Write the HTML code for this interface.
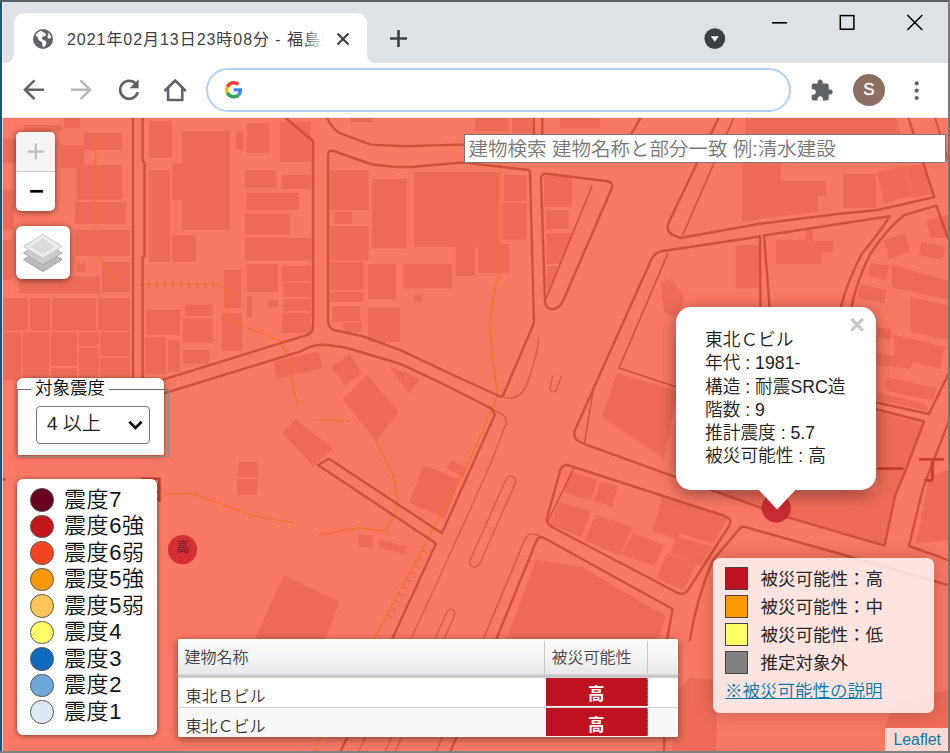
<!DOCTYPE html>
<html lang="ja">
<head>
<meta charset="utf-8">
<title>2021年02月13日23時08分 - 福島</title>
<style>
*{box-sizing:border-box;margin:0;padding:0}
html,body{width:950px;height:753px;overflow:hidden;background:#dee1e6}
body{position:relative;font-family:"Liberation Sans","Noto Sans CJK JP",sans-serif;color:#000}
.abs{position:absolute}
/* window frame */
#frameL{left:0;top:0;width:2px;height:753px;background:#185679;box-shadow:1px 0 0 rgba(255,255,255,.55)}
#frameT{left:0;top:0;width:950px;height:2px;background:#5b5e62}
#frameR{left:948px;top:0;width:2px;height:753px;background:#77787a}
#frameB{left:0;top:750.6px;width:950px;height:2.4px;background:#808182}
/* tab strip */
#tabstrip{left:2px;top:2px;width:946px;height:62px;background:#dee1e6}
#toolbar{left:2px;top:63px;width:946px;height:55px;background:#fff;border-bottom:1px solid #e3e8e7}
#tabtitle{left:67px;top:29px;width:257px;height:22px;font-size:16px;letter-spacing:.95px;line-height:22px;color:#3c4043;white-space:nowrap;overflow:hidden}
#tabfade{left:303px;top:28px;width:22px;height:24px;background:linear-gradient(90deg,rgba(255,255,255,0),#fff)}
#omni{left:206px;top:68px;width:585px;height:44px;border:2.5px solid #b2cff8;border-radius:22px;background:#fff}
#avatar{left:853px;top:74px;width:32px;height:32px;border-radius:50%;background:#8d6e63;color:#fff;font-size:17px;line-height:32px;text-align:center;-webkit-text-stroke:.35px #fff}
/* map */
#map{left:2px;top:118px;width:946px;height:633px;background:#f87964;overflow:hidden}

/* map UI (coords relative to #map: page x-2, page y-118) */
.jp{font-family:"Liberation Sans","Noto Sans CJK JP",sans-serif;font-weight:350}
#zoomc{left:14px;top:14px;width:39px;height:79px;border-radius:5px;background:#fff;box-shadow:0 1px 6px rgba(0,0,0,.55);overflow:hidden}
#zoomc .zi{height:39.5px;background:#f4f4f4;border-bottom:1px solid #ccc}
#layers{left:14px;top:107.5px;width:54px;height:53.5px;border-radius:6px;background:#fff;box-shadow:0 1px 6px rgba(0,0,0,.55)}
#search{left:461.5px;top:15.5px;width:482px;height:29.4px;background:#fff;border:1.5px solid #767676;font-size:19.5px;line-height:28px;color:#777;padding-left:4px;white-space:nowrap;overflow:hidden}
#fsbox{left:15px;top:260px;width:147px;height:77px;background:#fff;border-radius:6px 6px 2px 2px;box-shadow:0 1px 5px rgba(0,0,0,.5)}
#fsborder{left:15px;top:270.5px;width:152px;height:68px;border:1.5px solid #8a8a8a;border-top-color:#6b6b6b}
#fslegend{left:29px;top:260.5px;height:21px;padding:0 4px;background:#fff;font-size:17.5px;line-height:19px;white-space:nowrap}
#sel{left:34px;top:288px;width:114px;height:38px;border:1.3px solid #767676;border-radius:4px;background:#fff;font-size:19px;line-height:34px;padding-left:10px;white-space:nowrap;color:#222}
#leg1{left:15px;top:361px;width:140px;height:256px;background:#fff;border-radius:6px;box-shadow:0 1px 5px rgba(0,0,0,.5)}
#leg1 .r{position:absolute;left:0;width:140px;height:26.5px}
#leg1 .c{position:absolute;left:13px;top:1.5px;width:23.5px;height:23.5px;border-radius:50%;border:1.2px solid #555}
#leg1 .t{position:absolute;left:47px;top:-3px;font-size:22px;letter-spacing:.6px;line-height:32px;white-space:nowrap;color:#111}
#leg2{left:711px;top:439.5px;width:221px;height:155.5px;background:rgba(255,255,255,.8);border-radius:7px;box-shadow:0 0 19px rgba(0,0,0,.22)}
#leg2 .s{position:absolute;left:12px;width:23px;height:22.5px;border:1.2px solid #444}
#leg2 .t{position:absolute;left:47.5px;font-size:17.5px;font-weight:400;line-height:24px;white-space:nowrap;color:#262626}
#leg2 a{position:absolute;left:12px;top:121px;font-size:17.5px;line-height:24px;color:#0078a8;text-decoration:underline;white-space:nowrap}
#attr{left:883px;top:610px;width:63px;height:23px;background:rgba(255,255,255,.72);color:#0078a8;font-size:15.8px;line-height:24px;text-align:center;padding-left:1.5px}
#popup{left:674px;top:189.2px;width:200.4px;height:182.8px;background:#fff;border-radius:15px;box-shadow:0 4px 17px rgba(0,0,0,.4)}
#popup .l{position:absolute;left:29px;font-size:17.7px;line-height:23.2px;white-space:nowrap;color:#222}
#popclose{left:843.2px;top:194.2px;width:24px;height:26px;font:bold 27px/26px "Liberation Sans",sans-serif;color:#c6c6c6;text-align:center}
#tbl{left:176px;top:520.5px;width:500px;height:98px;background:#fff;box-shadow:0 2px 8px rgba(0,0,0,.45);border-radius:2px;overflow:hidden}
#tbl .h{position:absolute;left:0;top:0;width:500px;height:39.5px;background:linear-gradient(#fbfbfb 0,#f3f4f5 50%,#e6e8ea 90%,#c6c8ca 92%,#c2c4c6 97%,#d6d7d8 100%)}
#tbl .hs{position:absolute;top:2px;width:1.3px;height:33px;background:#c8c8c8}
#tbl .ht{position:absolute;top:7px;font-size:16px;line-height:24px;color:#444;white-space:nowrap}
#tbl .row{position:absolute;left:0;width:500px;height:29.5px}
#tbl .n{position:absolute;left:7.5px;top:7px;font-size:16px;line-height:24px;color:#333;white-space:nowrap}
#tbl .red{position:absolute;left:368px;top:0;width:101.7px;height:28.4px;background:#bf1220;border-right:1.5px dotted #e08088;color:#fff;font-weight:bold;font-size:16.5px;line-height:33px;text-align:center}
</style>
</head>
<body>
<div id="tabstrip" class="abs"></div>
<div id="toolbar" class="abs"></div>

<!-- active tab shape -->
<svg class="abs" style="left:0;top:0" width="950" height="120" viewBox="0 0 950 120">
  <path d="M3 64 C9 64 14 60 14 53 L14 24 C14 17 19 13 25 13 L356 13 C362 13 367 17 367 24 L367 53 C367 60 371 64 378 64 Z" fill="#fff"/>
  <!-- globe favicon -->
  <g transform="translate(33,29)">
    <circle cx="10" cy="10" r="10" fill="#5f6368"/>
    <path d="M8.8 1.7 C6 2.2 3.5 4 2.4 6.6 C4 7.4 5.2 8.6 5.4 10.2 C5.6 11.8 7.4 12 8.6 13 C9.6 13.9 8.9 15.6 9.6 17.2 C9.9 17.9 10.4 18.3 10.9 18.3 C12.3 16.8 13.6 15.3 13.4 13.4 C13.2 11.9 11.6 11.6 10.4 11 C9 10.3 8.4 9.2 9.4 8.1 C10.3 7.1 12 7.6 12.9 6.6 C13.8 5.5 12.7 4.3 11.5 3.7 C10.4 3.2 9.2 2.7 8.8 1.7 Z" fill="#fff"/>
    <path d="M14.6 3.2 C15.6 4.4 15.6 5.8 14.8 6.8 C14 7.8 14.6 9 15.8 9.4 C16.8 9.7 17.7 9.5 18.2 8.8 C17.9 6.5 16.6 4.5 14.6 3.2 Z" fill="#fff"/>
  </g>
  <!-- tab close -->
  <path d="M337.5 33.5 L348.5 44.5 M348.5 33.5 L337.5 44.5" stroke="#3c4043" stroke-width="2.2" fill="none"/>
  <!-- new tab plus -->
  <path d="M390 38.5 L407 38.5 M398.5 30 L398.5 47" stroke="#3c4043" stroke-width="2.6" fill="none"/>
  <!-- dropdown circle -->
  <circle cx="714.8" cy="38.6" r="10.4" fill="#3c4043"/>
  <path d="M710.8 36.3 L718.8 36.3 L714.8 41.8 Z" fill="#fff"/>
  <!-- window controls -->
  <path d="M772 22.8 L787 22.8" stroke="#000" stroke-width="1.6"/>
  <rect x="840.3" y="15.6" width="13.6" height="13.6" fill="none" stroke="#000" stroke-width="1.5"/>
  <path d="M907.3 15 L922.3 30 M922.3 15 L907.3 30" stroke="#000" stroke-width="1.5" fill="none"/>
  <!-- back -->
  <path d="M44 89.7 L25.5 89.7 M34.5 80.3 L25 89.7 L34.5 99.1" stroke="#5f6368" stroke-width="2.6" fill="none"/>
  <!-- forward -->
  <path d="M71 89.7 L89.5 89.7 M80.5 80.3 L90 89.7 L80.5 99.1" stroke="#b5b7ba" stroke-width="2.6" fill="none"/>
  <!-- reload -->
  <path d="M136.2 84.2 A9 9 0 1 0 137.8 92.2" stroke="#5f6368" stroke-width="2.6" fill="none"/>
  <path d="M138.6 79.2 L138.6 88.2 L129.6 88.2 Z" fill="#5f6368"/>
  <!-- home -->
  <path d="M164.6 91 L175.2 80.5 L185.8 91 M168.1 88.5 L168.1 100 L182.3 100 L182.3 88.5" stroke="#5f6368" stroke-width="2.6" fill="none" stroke-linejoin="miter"/>
  <!-- extension puzzle -->
  <path d="M830.2 89.5 L828.7 89.5 L828.7 85.5 C828.7 84.4 827.8 83.5 826.7 83.5 L822.7 83.5 L822.7 82 C822.7 80.6 821.6 79.5 820.2 79.5 C818.8 79.5 817.7 80.6 817.7 82 L817.7 83.5 L813.7 83.5 C812.6 83.5 811.7 84.4 811.7 85.5 L811.7 89.3 L813.2 89.3 C814.7 89.3 815.9 90.5 815.9 92 C815.9 93.5 814.7 94.7 813.2 94.7 L811.7 94.7 L811.7 98.5 C811.7 99.6 812.6 100.5 813.7 100.5 L817.5 100.5 L817.5 99 C817.5 97.5 818.7 96.3 820.2 96.3 C821.7 96.3 822.9 97.5 822.9 99 L822.9 100.5 L826.7 100.5 C827.8 100.5 828.7 99.6 828.7 98.5 L828.7 94.5 L830.2 94.5 C831.6 94.5 832.7 93.4 832.7 92 C832.7 90.6 831.6 89.5 830.2 89.5 Z" fill="#5f6368"/>
  <!-- menu dots -->
  <circle cx="916.7" cy="83.3" r="2.1" fill="#5f6368"/>
  <circle cx="916.7" cy="90.6" r="2.1" fill="#5f6368"/>
  <circle cx="916.7" cy="98" r="2.1" fill="#5f6368"/>
</svg>
<div id="tabtitle" class="abs">2021年02月13日23時08分 - 福島県沖</div>
<div id="tabfade" class="abs"></div>
<div id="omni" class="abs"></div>
<!-- Google G -->
<svg class="abs" style="left:225px;top:81px" width="17.5" height="17.5" viewBox="0 0 48 48">
  <path fill="#EA4335" d="M24 9.5c3.54 0 6.71 1.22 9.21 3.6l6.85-6.85C35.9 2.38 30.47 0 24 0 14.62 0 6.51 5.38 2.56 13.22l7.98 6.19C12.43 13.72 17.74 9.5 24 9.5z"/>
  <path fill="#4285F4" d="M46.98 24.55c0-1.57-.15-3.09-.38-4.55H24v9.02h12.94c-.58 2.96-2.26 5.48-4.78 7.18l7.73 6c4.51-4.18 7.09-10.36 7.09-17.65z"/>
  <path fill="#FBBC05" d="M10.53 28.59c-.48-1.45-.76-2.99-.76-4.59s.27-3.14.76-4.59l-7.98-6.19C.92 16.46 0 20.12 0 24c0 3.88.92 7.54 2.56 10.78l7.97-6.19z"/>
  <path fill="#34A853" d="M24 48c6.48 0 11.93-2.13 15.89-5.81l-7.73-6c-2.15 1.45-4.92 2.3-8.16 2.3-6.26 0-11.57-4.22-13.47-9.91l-7.98 6.19C6.51 42.62 14.62 48 24 48z"/>
</svg>
<div id="avatar" class="abs">S</div>

<!-- MAP -->
<div id="map" class="abs">
<!--MAPSVG-START-->
<svg class="abs" style="left:0;top:0;filter:blur(.4px)" width="946" height="633" viewBox="2 118 946 633">
<rect x="0" y="100" width="960" height="660" fill="#f97863"/>
<g fill="#ed6b56">
<rect x="75" y="202" width="50.6" height="22"/>
<rect x="75" y="230" width="55" height="26"/>
<rect x="76.5" y="263.4" width="9.5" height="8.4"/>
<rect x="19" y="276.5" width="81" height="17.0"/>
<rect x="3" y="139" width="18" height="24"/>
<rect x="24" y="125" width="38" height="6"/>
<rect x="60" y="145" width="24" height="23"/>
<rect x="76.5" y="165" width="45.5" height="34.5"/>
<rect x="84" y="133" width="38" height="17"/>
<rect x="64" y="118" width="16" height="10"/>
<rect x="2" y="190" width="12" height="40"/>
<rect x="2" y="240" width="10" height="40"/>
<rect x="102" y="262" width="28" height="30"/>
<rect x="3" y="298" width="127" height="82"/>
<rect x="149" y="121" width="23" height="37"/>
<rect x="182" y="131" width="48" height="99"/>
<rect x="172" y="163" width="10" height="37"/>
<rect x="149" y="170" width="21" height="92"/>
<rect x="172" y="235" width="24" height="27"/>
<rect x="236" y="131" width="7" height="19"/>
<rect x="247" y="123" width="22.6" height="29.8"/>
<rect x="280" y="121.5" width="31" height="40.0"/>
<rect x="245" y="170" width="31.5" height="17.6"/>
<rect x="281.7" y="175" width="29.3" height="14"/>
<rect x="247" y="192.8" width="52" height="17.2"/>
<rect x="245" y="213.7" width="45" height="20.8"/>
<rect x="245" y="238" width="66" height="22.6"/>
<rect x="247" y="264" width="31" height="28"/>
<rect x="281.7" y="265.8" width="29.3" height="15.7"/>
<rect x="283.5" y="283" width="27.5" height="14"/>
<rect x="283.5" y="299" width="27.5" height="12"/>
<rect x="281.7" y="312.8" width="29.3" height="20.2"/>
<rect x="224" y="270" width="17" height="38"/>
<rect x="185" y="304.7" width="27.6" height="11.3"/>
<rect x="183" y="318.4" width="29.6" height="24.2"/>
<rect x="146" y="310" width="34" height="25"/>
<rect x="183" y="350" width="26.5" height="13.7"/>
<rect x="222" y="313" width="20" height="38"/>
<rect x="145" y="337" width="21" height="37"/>
<rect x="168.4" y="340.5" width="11.6" height="31.5"/>
<rect x="247" y="296" width="5" height="22"/>
<rect x="268" y="300" width="10" height="7"/>
<rect x="414" y="172" width="85" height="74.7"/>
<rect x="372" y="179" width="35" height="69.4"/>
<rect x="330.4" y="170" width="38.3" height="40"/>
<rect x="330" y="226" width="38.7" height="34.6"/>
<rect x="330" y="262" width="33.5" height="28"/>
<rect x="330" y="292" width="33.5" height="10"/>
<rect x="332" y="306" width="28" height="15.5"/>
<rect x="342.6" y="323" width="19.1" height="9"/>
<rect x="368" y="264" width="27.8" height="35"/>
<rect x="368" y="307.6" width="32" height="34.4"/>
<rect x="403.5" y="264" width="48.5" height="24.4"/>
<rect x="455.7" y="243" width="19.1" height="33"/>
<rect x="478" y="244" width="31.6" height="28.8"/>
<rect x="504" y="175" width="23" height="26.5"/>
<rect x="502.6" y="203" width="24.4" height="36.7"/>
<rect x="414" y="294.7" width="8.6" height="7.0"/>
<rect x="334" y="212" width="18" height="12"/>
<rect x="475" y="117" width="33.6" height="14"/>
<rect x="512" y="117" width="20" height="16"/>
<rect x="350" y="117" width="22" height="5"/>
<rect x="560" y="117" width="40" height="11"/>
<rect x="544" y="176" width="28" height="30.7"/>
<rect x="546" y="210" width="22.7" height="19"/>
<rect x="843" y="174" width="33" height="34"/>
<rect x="735.6" y="245" width="24.4" height="43.4"/>
<rect x="238.7" y="462" width="19.1" height="15"/>
<rect x="237" y="479" width="20" height="16"/>
<rect x="358.7" y="535" width="13.9" height="12"/>
<polygon points="280,121.5 290,121.5 311,140 311,161.5 280,161.5"/>
<polygon points="745,117 896,117 902,140 745,140"/>
<polygon points="678,690 690,678 718,680 716,752 672,752"/>
<polygon points="905,700 948,690 948,728 885,728 890,712"/>
<polygon points="546.5,233 572.5,233 560,264 546.5,264"/>
<polygon points="547,266 559,266 548.5,294 547,294"/>
<polygon points="742.6,163 781,163 781,181 826,181 826,196 818,196 818,212 760,219 742.6,222"/>
<polygon points="877,172 905,166 912,196 884,203"/>
<polygon points="906,166 924,164 932,194 913,198"/>
<polygon points="661,282 672,279 684,298 678,318 664,312"/>
<polygon points="617.4,373.5 678,391 664,458.7 601.7,417"/>
<polygon points="776,239.7 805.7,239.7 805.7,230 813,230 813,240.8 833,240.8 833,252.5 821.6,252.5 821.6,264 776,264"/>
<polygon points="884,240 905,233 910,252 889,259"/>
<polygon points="870.5,262.5 889,266 886,280 868,276"/>
<polygon points="860,284 886.5,290 884,303 857,298"/>
<polygon points="892,265 948,281 948,300 892,287"/>
<polygon points="910.4,297 948,305 948,340 910.4,331.7"/>
<polygon points="894.5,334.4 945,347 940,369 894.5,357"/>
<polygon points="886.5,377 937,388 933,401 886.5,391"/>
<polygon points="877,326.4 892,330 890,340 877,337"/>
<polygon points="877,353 913,360 911,369 877,365"/>
<polygon points="921,241 945,247 943,260 919,255"/>
<polygon points="926,220 948,215 948,238 930,238"/>
<polygon points="877,392 925,404 929,411 877,400"/>
<polygon points="858,312 876,316 876,338 852,334"/>
<polygon points="273.5,361.3 318.7,351.6 322,368 277,378.7"/>
<polygon points="331,366.5 350,354.3 362,373.5 344.8,385.7"/>
<polygon points="343,399.6 367.4,375 398.7,411.7 376,441.3"/>
<polygon points="390,366.5 419.6,378.7 409,394.3"/>
<polygon points="282,432.6 296,419.4 332.6,448.3 313.5,466.3"/>
<polygon points="423.8,465.2 459.7,479.8 445,518.4 409.2,502.4"/>
<polygon points="451.7,460 467.6,468 463.7,477 446.4,468"/>
<polygon points="379.6,540 407.4,546 405,554 378,548"/>
<polygon points="283.6,575.4 339.4,602 324.8,640 254.4,640"/>
<polygon points="570.3,471.7 597.4,479.7 591,500.4 563,492.4"/>
<polygon points="600.5,481.3 618,486 611.7,506.8 594.2,501.3"/>
<polygon points="559,502 591,511.5 581.4,537 549.6,524.3"/>
<polygon points="595.8,514.7 632.4,527.5 619.7,556 584.6,540.2"/>
<polygon points="632.4,533.8 664.3,545 654.7,565.7 621.3,554.6"/>
<polygon points="662.7,495.6 728,518 713.7,543.4 680.2,533.8 677,540.2 653,530.7"/>
<polygon points="667.5,553 696,564 683.4,591 656.3,578.5"/>
<polygon points="677,537 712,546.6 700,566 670.7,553"/>
<polygon points="536,560 583.6,567 598.7,577 666,616.2 658,640 506,640"/>
<polygon points="716,491 786,517 884.5,545 895.3,495 905,471 922,424 877,411.5 877,491"/>
<polygon points="930,476 948,470 948,540 916,543"/>
</g>
<g fill="none" stroke="#f97863" stroke-width="2">
<path d="M29 298 L29 331"/>
<path d="M51 298 L51 331"/>
<path d="M97 298 L97 331"/>
<path d="M3 331.5 L130 331.5"/>
<path d="M22 332 L22 380"/>
<path d="M50 332 L50 380"/>
<path d="M78 332 L78 380"/>
<path d="M99.5 332 L99.5 380"/>
<path d="M99.5 357 L130 357"/>
<path d="M78 347 L99.5 347"/>
<path d="M50 367 L78 367"/>
</g>
<g fill="none" stroke="#e9684f" stroke-width="7" stroke-dasharray="1.4 6.7"><path d="M148 284.5 L216 284.5"/><path d="M424 551 L386 622"/></g>
<g fill="none" stroke="#f07226" stroke-linejoin="round">
<path d="M95.7 135 L95.7 228 M100.4 257.4 Q106 272 117 282.5" stroke-width="1.15"/>
<path d="M140 284.5 L218 284.5 L228 290 L228 318 L245 327 L281 341 L287 356" stroke-width="1.15"/>
<path d="M287 356 L297.8 406.5" stroke-width="1.15"/>
<path d="M317 419.7 L350 421" stroke-width="1.15"/>
<path d="M376 441.3 L393.5 476 L398.7 504 L386.5 531.7 L358.7 527.6 L318.7 535.2" stroke-width="1.15"/>
<path d="M164 493.5 L191.7 493.5 L254.3 516 L294.3 523" stroke-width="1.15"/>
<path d="M500.9 163 L500.9 271 L495.6 285 L489.5 320 L492 352.8 L497 390.7 L495.8 400.8 L467.7 464.5 L419.8 554 L382.7 623 L313 752" stroke-width="1.15"/>
</g>
<g fill="none" stroke="#d65842" stroke-linejoin="round" stroke-linecap="round">
<path d="M436 752 L483 640 L524.6 540 Q528 532 536 534.5 L546 539" stroke-width="1.4"/>
<path d="M492.6 409.2 L499.3 412.6 Q508 416 506 424 L490.3 464.5 L447.4 560 L412 636.5 L358.5 752" stroke-width="1.2"/>
<path d="M506 479.5 Q509 474 514 477.5 Q517 480 515 484 L480 563 Q476 569 471.5 566 Q468.5 563.5 470.5 559 Z" stroke-width="1.2"/>
<path d="M446.5 613 Q449 607.5 453 610 Q456 612 454 616.5 L395 752 M385 752 L446.5 613" stroke-width="1.2"/>
<path d="M552.5 376 L550 388 Q551 394 556 391 L561 377" stroke-width="1.2"/>
<path d="M538 338 Q540 345 529 378 Q525 396 510 398.5 L503 397" stroke-width="1.2"/>
</g>
<g fill="none" stroke="#cf4f39" stroke-linejoin="round" stroke-linecap="round">
<path d="M133 117 L133 390" stroke-width="2.4"/>
<path d="M142.6 117 L142.6 161 L144.5 162.5 L144.5 256 L142.6 257.5 L142.6 386" stroke-width="2.4"/>
<path d="M142.6 385.8 L306 335.3 Q313 333 313 326 L313 141 L284.5 117" stroke-width="2.4"/>
<path d="M165 393 L300 351.6 Q312 345 320 344.8 Q335 345 350.5 349 L401 364.2 L451.6 388.2 L492.6 409.2 L494.8 414.8 L441.8 533.3 L329 458.7 L318 465 L436 543.5 L393.3 636.5 L340.3 752" stroke-width="2.4"/>
<path d="M328 156 Q328 148.5 335 151.5 L372 164.5 Q400 168 414 166.7 L462.6 162.5 L528.7 170 L530 172 L534 323 L503.5 394.5 Q502 398 498 395.5 L451.6 374.3 L401 350.3 L363 336.4 L334 330 Q328 328 328 320 Z" stroke-width="2.4"/>
<path d="M326.7 117 Q333 131 342 134 L370.5 144.6 L404 146.3 L461.5 144.6 L528 147 Q534 147.5 533.9 142 L533.9 117" stroke-width="2.4"/>
<path d="M542.3 117 L542.3 150" stroke-width="2.4"/>
<path d="M641 117 L628 140" stroke-width="2.4"/>
<path d="M934.8 117 L948 160" stroke-width="1.8"/>
<path d="M541 179 Q541 173 547 173.8 L606 181 Q615 182.5 611 190 L563 301 Q558.5 310 551 309 Q545.5 308 545 301 Z" stroke-width="2.4"/>
<path d="M592 186 L546 299" stroke-width="1.5"/>
<path d="M719 117 L669 222 Q665.5 230.5 672 234.5 L680 238 L760 223.8 L840 213.7 L878 210 L934.3 197.2 L923.7 164 L908 117" stroke-width="2.4"/>
<path d="M734 117 L683 234.5" stroke-width="1.6"/>
<path d="M760 236.5 L663 251 Q654.5 252.5 651.5 259 L575 430 Q572 438 580 442 L586 444.6 L786 517" stroke-width="2.4"/>
<path d="M667.8 253.7 L619 368 L678 387.4" stroke-width="1.6"/>
<path d="M593 391 L584.3 444" stroke-width="1.4"/>
<path d="M760 236.5 L760.5 306" stroke-width="2.4"/>
<path d="M764 235.5 L889.6 216.3 Q880 232 862 253.5 Q848 280 840.8 307" stroke-width="2.4"/>
<path d="M764 235.5 L769.6 307" stroke-width="2.4"/>
<path d="M948 238.6 L936.4 205.7 L904.5 215 Q887.5 228 870.5 253.5 Q857 280 851.4 307" stroke-width="2.4"/>
<path d="M785 516.7 L884.5 545.6 L895.3 495 L905.5 470.6 L924 421.5 L877 409.5" stroke-width="2.4"/>
<path d="M950 418 L923 488 L909 546 L950 560.7" stroke-width="2.4"/>
<path d="M876 402.5 L929 414 L950 371" stroke-width="2.4"/>
<path d="M875 469 L904 469" stroke-width="1.5"/>
<path d="M569 465.5 L725 516 Q733 519 729 526 L688 590 Q683.4 596.5 676 592 L552 527 Q545 522.7 547.5 516 L560 471 Q562.5 463.5 569 465.5 Z" stroke-width="2.4"/>
<path d="M573.5 468.5 L548 521" stroke-width="1.5"/>
<path d="M713 560 L738.5 530 Q741 525 747 527.5 L830 551 L948 585" stroke-width="2.4"/>
<path d="M713 560 Q696 600 690 640" stroke-width="2.4"/>
<path d="M450.3 752 L496 640 L536.4 541 Q538.5 535 545 538.5 L672.5 609 L667 640 L664 752" stroke-width="2.4"/>
</g>
<g font-size="28" font-weight="500" fill="#c7412c" font-family="'Liberation Sans','Noto Sans CJK JP',sans-serif"><text x="876" y="479.5" letter-spacing="13.5">一丁</text><text x="137" y="500">目</text><text x="-21" y="500">丁</text></g>
</svg>
<!--MAPSVG-END-->

<div id="zoomc" class="abs"><div class="zi"></div></div>
<svg class="abs" style="left:14px;top:14px" width="39" height="79" viewBox="0 0 39 79">
  <path d="M12 19.6 L27.6 19.6 M19.8 11.8 L19.8 27.4" stroke="#bdbdbd" stroke-width="2.2" fill="none"/>
  <path d="M14.2 59.3 L27 59.3" stroke="#000" stroke-width="2.7" fill="none"/>
</svg>
<div id="layers" class="abs"></div>
<svg class="abs" style="left:14px;top:107.5px" width="54" height="53.5" viewBox="0 0 54 53.5">
  <path d="M26.8 21.6 L46 33.6 L26.8 45.5 L7.6 33.6 Z" fill="#bcbcbc" stroke="#9a9a9a" stroke-width=".9"/>
  <path d="M26.8 15.1 L46 27.1 L26.8 39 L7.6 27.1 Z" fill="#cccccc" stroke="#a6a6a6" stroke-width=".9"/>
  <path d="M26.8 8.4 L46 20.4 L26.8 32.3 L7.6 20.4 Z" fill="#ececec" stroke="#c0c0c0" stroke-width=".9"/>
  <path d="M26.8 12.5 L39.4 20.4 L26.8 28.2 L14.2 20.4 Z" fill="#dadada"/>
</svg>
<div id="search" class="abs jp">建物検索 建物名称と部分一致 例:清水建設</div>

<div id="fsbox" class="abs"></div>
<div id="fsborder" class="abs"></div>
<div id="fslegend" class="abs jp">対象震度</div>
<div id="sel" class="abs jp">4 以上</div>
<svg class="abs" style="left:123.8px;top:300px" width="20" height="14" viewBox="0 0 20 14"><path d="M3.4 3.8 L9.5 9.9 L15.6 3.8" stroke="#000" stroke-width="2.7" fill="none"/></svg>

<div id="leg1" class="abs jp">
  <div class="r" style="top:7.5px"><div class="c" style="background:#67001f"></div><div class="t">震度7</div></div>
  <div class="r" style="top:34px"><div class="c" style="background:#c3171e"></div><div class="t">震度6強</div></div>
  <div class="r" style="top:60.5px"><div class="c" style="background:#f4431f"></div><div class="t">震度6弱</div></div>
  <div class="r" style="top:87px"><div class="c" style="background:#f8990b"></div><div class="t">震度5強</div></div>
  <div class="r" style="top:113.5px"><div class="c" style="background:#fec55a"></div><div class="t">震度5弱</div></div>
  <div class="r" style="top:140px"><div class="c" style="background:#ffff66"></div><div class="t">震度4</div></div>
  <div class="r" style="top:166.5px"><div class="c" style="background:#0f6abe"></div><div class="t">震度3</div></div>
  <div class="r" style="top:193px"><div class="c" style="background:#6ea8da"></div><div class="t">震度2</div></div>
  <div class="r" style="top:219.5px"><div class="c" style="background:#dce9f5"></div><div class="t">震度1</div></div>
</div>

<div id="tbl" class="abs jp">
  <div class="h"></div>
  <div class="hs" style="left:365.8px"></div><div class="hs" style="left:468.8px"></div>
  <div class="ht" style="left:6.5px">建物名称</div>
  <div class="ht" style="left:373.5px">被災可能性</div>
  <div class="row" style="top:39.5px;background:#fff;border-bottom:1.2px solid #d0d0d0"><div class="n">東北Ｂビル</div><div class="red">高</div></div>
  <div class="row" style="top:69px;background:#f8f8f8"><div class="n">東北Ｃビル</div><div class="red" style="top:0;height:28.2px;line-height:34px">高</div></div>
</div>

<div id="leg2" class="abs jp">
  <div class="s" style="top:9.5px;background:#bd1220"></div><div class="t" style="top:9px">被災可能性：高</div>
  <div class="s" style="top:37.5px;background:#ff9900"></div><div class="t" style="top:37px">被災可能性：中</div>
  <div class="s" style="top:65.5px;background:#ffff66"></div><div class="t" style="top:65px">被災可能性：低</div>
  <div class="s" style="top:93.5px;background:#808080"></div><div class="t" style="top:93px">推定対象外</div>
  <a>※被災可能性の説明</a>
</div>
<div id="attr" class="abs">Leaflet</div>

<svg class="abs" style="left:0;top:0;pointer-events:none" width="946" height="633" viewBox="0 0 946 633">
  <circle cx="180.5" cy="431.6" r="14.6" fill="#d02a30" fill-opacity=".93"/>
  <circle cx="774.2" cy="390" r="14.6" fill="#c6282f" fill-opacity=".95"/>
  <text x="180.7" y="432.8" font-size="13" text-anchor="middle" fill="#6c1b1f" font-family="'Liberation Sans','Noto Sans CJK JP',sans-serif">高</text>
</svg>
<div id="popup" class="abs jp">
  <div class="l" style="top:22.0px">東北Ｃビル</div>
  <div class="l" style="top:45.2px">年代 : 1981-</div>
  <div class="l" style="top:68.4px">構造 : 耐震SRC造</div>
  <div class="l" style="top:91.6px">階数 : 9</div>
  <div class="l" style="top:114.8px">推計震度 : 5.7</div>
  <div class="l" style="top:138.0px">被災可能性 : 高</div>
</div>
<svg class="abs" style="left:755px;top:371px" width="42" height="22" viewBox="0 0 42 22"><path d="M1 0 L39.2 0 L20.1 20.6 Z" fill="#fff"/></svg>
<div id="popclose" class="abs">×</div>
<!--MAPUI-->
</div>

<div id="frameL" class="abs"></div>
<div id="frameT" class="abs"></div>
<div id="frameR" class="abs"></div>
<div id="frameB" class="abs"></div>
</body>
</html>
